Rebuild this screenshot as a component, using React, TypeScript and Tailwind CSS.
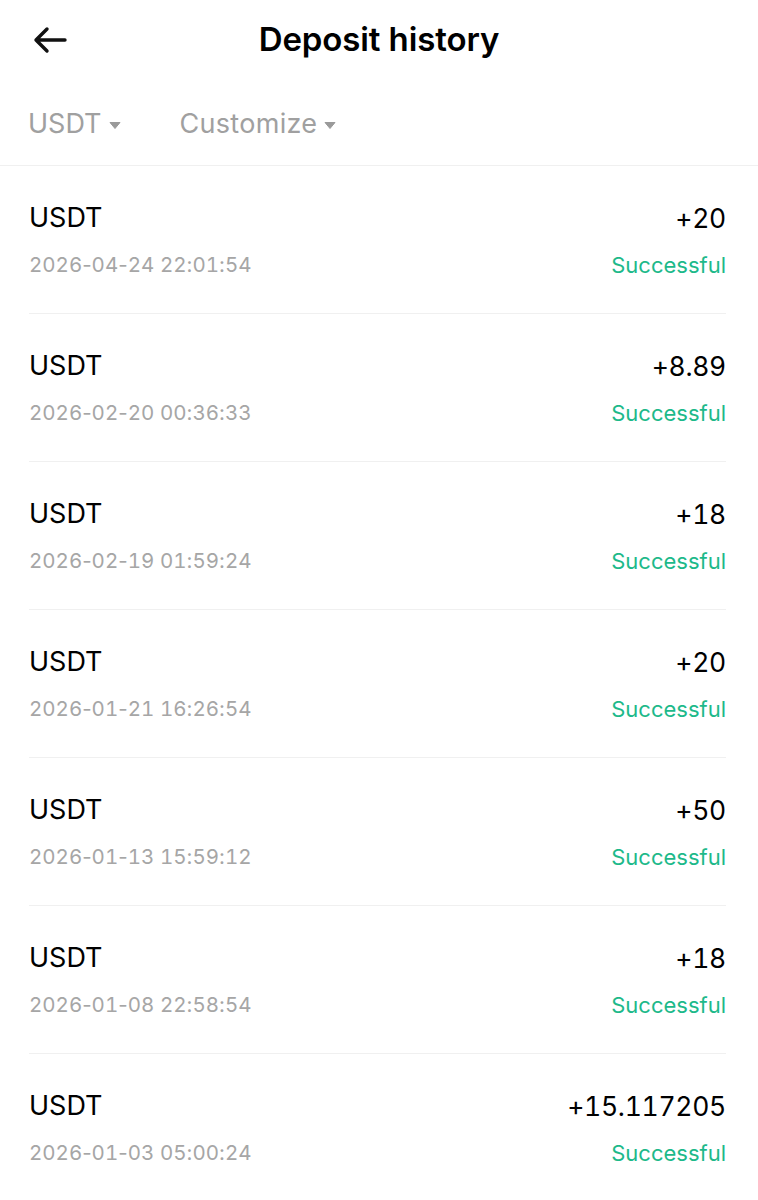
import React from 'react';

const records = [
  { amount: '+20', time: '2026-04-24 22:01:54' },
  { amount: '+8.89', time: '2026-02-20 00:36:33' },
  { amount: '+18', time: '2026-02-19 01:59:24' },
  { amount: '+20', time: '2026-01-21 16:26:54' },
  { amount: '+50', time: '2026-01-13 15:59:12' },
  { amount: '+18', time: '2026-01-08 22:58:54' },
  { amount: '+15.117205', time: '2026-01-03 05:00:24' },
];

function Caret() {
  return (
    <svg width="12" height="9" viewBox="0 0 12 9" className="ml-[7px] mt-[2px]">
      <path d="M1 1.5h10L6 7.5z" fill="#9a9a9a" stroke="#9a9a9a" strokeWidth="1" strokeLinejoin="round" />
    </svg>
  );
}

// digits tabular, separators at their normal width
function Stamp({ value }: { value: string }) {
  return (
    <span className="text-[#a6a6a6] tabular-nums">
      {value.split(/([-: ])/).map((part, i) =>
        /^[-: ]$/.test(part) ? (
          <span key={i} className="normal-nums">{part}</span>
        ) : (
          <span key={i}>{part}</span>
        )
      )}
    </span>
  );
}

export default function App() {
  return (
    <div className="w-[758px] h-[1200px] overflow-hidden bg-white text-black" style={{ fontFamily: 'Inter, "Noto Sans", sans-serif' }}>
      {/* Header */}
      <div className="relative h-[80px] flex items-center justify-center">
        <button className="absolute left-[32px] top-[22px] w-[40px] h-[36px] flex items-center">
          <svg width="36" height="28" viewBox="0 0 36 28" fill="none">
            <path d="M33 14H4M15 3L4 14l11 11" stroke="#111" strokeWidth="3.4" strokeLinecap="round" strokeLinejoin="round" />
          </svg>
        </button>
        <h1 className="text-[33px] font-semibold tracking-[-0.1px]">Deposit history</h1>
      </div>

      {/* Filters */}
      <div className="h-[86px] flex items-center pl-[28px] pt-[4px] border-b border-[#f0f0f0] text-[27px] text-[#a0a0a0]">
        <div className="flex items-center">
          <span>USDT</span>
          <Caret />
        </div>
        <div className="flex items-center ml-[59px]">
          <span className="tracking-[0.3px]">Customize</span>
          <Caret />
        </div>
      </div>

      {/* List */}
      <div className="pl-[29px] pr-[32px]">
        {records.map((r, i) => (
          <div key={i} className="border-b border-[#f0f0f0] pt-[36px] pb-[34px]">
            <div className="flex justify-between items-center h-[32px] text-[27px] leading-[32px]">
              <span>USDT</span>
              <span className="tabular-nums text-[26.5px] tracking-[-0.3px]">{r.amount}</span>
            </div>
            <div className="flex justify-between items-center mt-[17px] h-[28px] text-[20.5px] leading-[28px]">
              <Stamp value={r.time} />
              <span className="text-[#1db98a] text-[22px]">Successful</span>
            </div>
          </div>
        ))}
      </div>
    </div>
  );
}
